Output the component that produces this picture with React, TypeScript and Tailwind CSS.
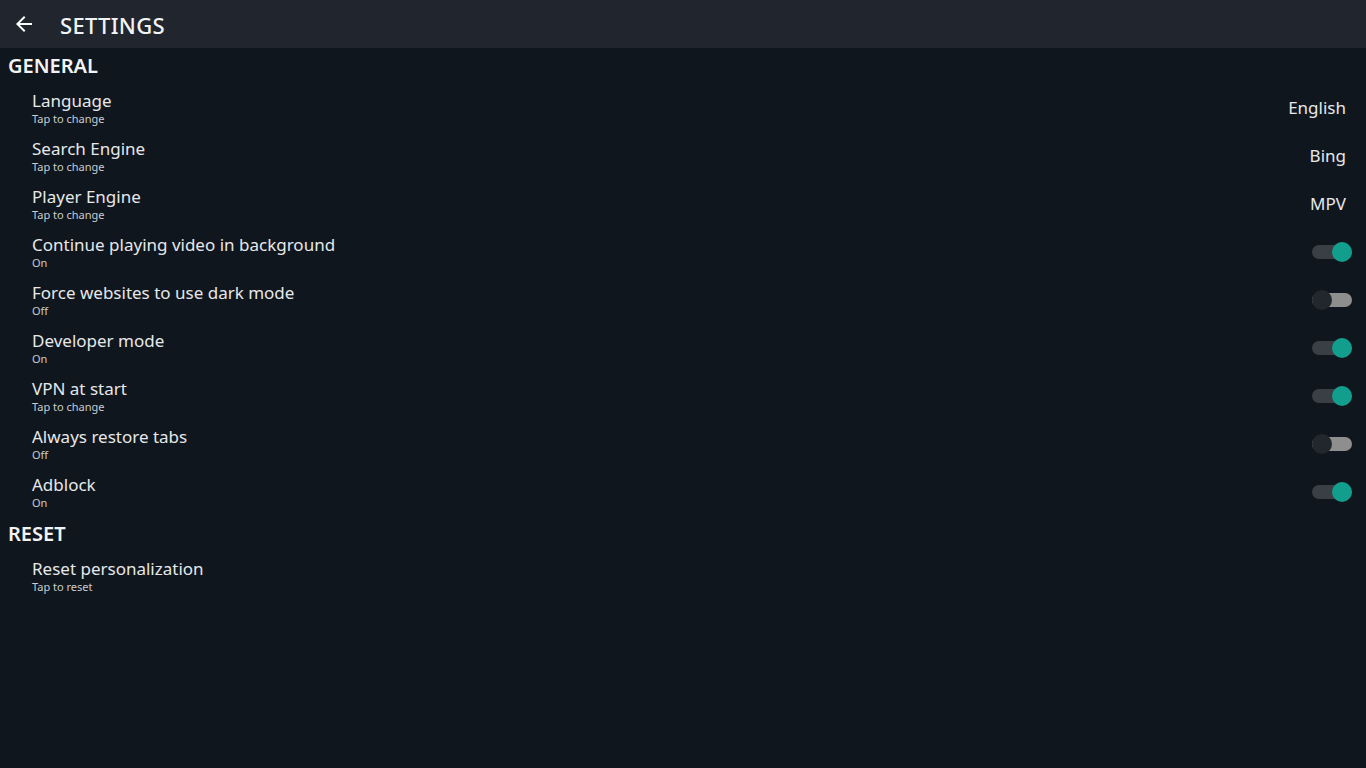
import React, { useState } from "react";

type Item = {
  title: string;
  caption: string;
  value?: string;
  toggle?: boolean;
};

const general: Item[] = [
  { title: "Language", caption: "Tap to change", value: "English" },
  { title: "Search Engine", caption: "Tap to change", value: "Bing" },
  { title: "Player Engine", caption: "Tap to change", value: "MPV" },
  { title: "Continue playing video in background", caption: "On", toggle: true },
  { title: "Force websites to use dark mode", caption: "Off", toggle: false },
  { title: "Developer mode", caption: "On", toggle: true },
  { title: "VPN at start", caption: "Tap to change", toggle: true },
  { title: "Always restore tabs", caption: "Off", toggle: false },
  { title: "Adblock", caption: "On", toggle: true },
];

function Toggle({ on }: { on: boolean }) {
  return (
    <div className="relative w-[40px] h-[20px] flex items-center">
      <div className={`w-full h-[14px] rounded-full ${on ? "bg-[#3a3e45]" : "bg-[#8e8e8e]"}`} />
      <div
        className={`absolute top-0 w-[20px] h-[20px] rounded-full ${on ? "left-[20px] bg-[#129e8c]" : "left-0 bg-[#22272e]"}`}
      />
    </div>
  );
}

function Row({ item }: { item: Item }) {
  const [on, setOn] = useState(!!item.toggle);
  return (
    <div
      className="h-[48px] flex items-center justify-between pl-[32px] pr-[14px] cursor-pointer"
      onClick={() => item.toggle !== undefined && setOn(!on)}
    >
      <div className="flex flex-col">
        <span className="text-[17px] leading-[20px] text-[#e6e8ea]">{item.title}</span>
        <span className="text-[11px] leading-[14px] text-[#c9ccd0] mt-[1px]">
          {item.toggle !== undefined && item.caption !== "Tap to change" ? (on ? "On" : "Off") : item.caption}
        </span>
      </div>
      {item.value && <span className="text-[17px] text-[#e6e8ea] pr-[6px]">{item.value}</span>}
      {item.toggle !== undefined && <Toggle on={on} />}
    </div>
  );
}

export default function App() {
  return (
    <div
      className="min-h-screen bg-[#10161d] text-white"
      style={{ fontFamily: '"Noto Sans", "Open Sans", sans-serif' }}
    >
      <div className="h-[48px] bg-[#21262e] flex items-center">
        <button className="w-[48px] h-[48px] flex items-center justify-center">
          <svg width="24" height="24" viewBox="0 0 24 24" fill="#ffffff">
            <path d="M20 11H7.83l5.59-5.59L12 4l-8 8 8 8 1.41-1.41L7.83 13H20v-2z" />
          </svg>
        </button>
        <h1 className="ml-[12px] mt-[3px] text-[22px] font-medium tracking-[0.3px] text-[#f2f3f4]">SETTINGS</h1>
      </div>

      <div className="h-[36px] flex items-center px-[8px]">
        <h2 className="text-[20px] font-semibold text-[#f2f3f4]">GENERAL</h2>
      </div>
      {general.map((it) => (
        <Row key={it.title} item={it} />
      ))}

      <div className="h-[36px] flex items-center px-[8px]">
        <h2 className="text-[20px] font-semibold text-[#f2f3f4]">RESET</h2>
      </div>
      <Row item={{ title: "Reset personalization", caption: "Tap to reset" }} />
    </div>
  );
}
